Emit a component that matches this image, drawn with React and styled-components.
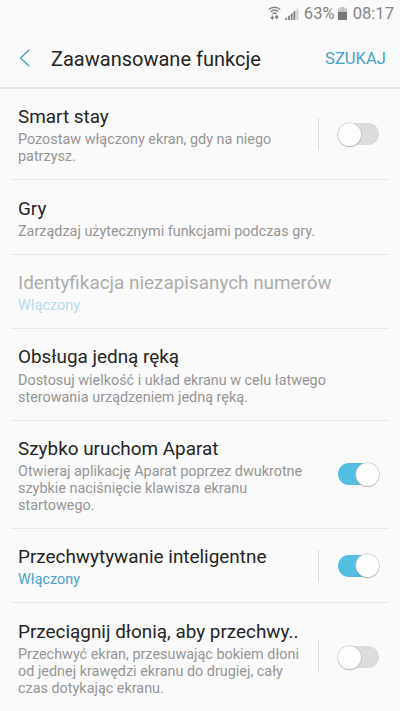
import React from "react";
import styled, { createGlobalStyle } from "styled-components";

const GlobalStyle = createGlobalStyle`
  * {
    box-sizing: border-box;
  }
  body {
    margin: 0;
    background-color: #fafafa;
    font-family: Roboto, sans-serif;
    overflow: hidden;
  }
`;

const Screen = styled.div`
  width: 400px;
  height: 711px;
  overflow: hidden;
  background-color: #fafafa;
`;

const StatusBar = styled.div`
  height: 28px;
  padding-right: 6px;
  display: flex;
  align-items: center;
  justify-content: flex-end;
  color: #858585;
  font-size: 16.6px;
  line-height: 28px;
`;

const WifiIcon = styled.svg`
  width: 13px;
  height: 14px;
  margin: 0 4px 2px 0;
`;

const SignalIcon = styled.svg`
  width: 14px;
  height: 13px;
  margin: 0 5px 1px 0;
`;

const BatteryIcon = styled.svg`
  width: 9px;
  height: 13px;
  margin: 0 6px 1px 3px;
`;

const HeaderBox = styled.header`
  height: 61px;
  padding: 3px 14px 0 19px;
  display: flex;
  align-items: center;
  border-bottom: 2px solid #e8e8e8;
`;

const BackIcon = styled.svg`
  width: 12px;
  height: 18px;
  margin: 0 20px 3px 0;
`;

const HeaderTitle = styled.h1`
  margin: 0;
  color: #252525;
  font-size: 20px;
  font-weight: 400;
  line-height: 24px;
  white-space: nowrap;
`;

const SearchButton = styled.button`
  margin-left: auto;
  padding: 0;
  border: 0;
  background: none;
  color: #47a3c7;
  font-family: inherit;
  font-size: 16.6px;
  line-height: 24px;
`;

const List = styled.ul`
  margin: 0;
  padding: 0 11px;
  list-style-type: none;
`;

const Row = styled.li`
  padding: 16.1px 10px 14.14px 7px;
  display: flex;
  align-items: center;
  border-bottom: 1px solid #e9e9e9;

  &:last-child {
    border-bottom: 0;
  }
`;

const RowText = styled.div`
  flex: 1;
  min-width: 0;
`;

const RowTitle = styled.h2`
  margin: 0 0 2.2px;
  color: ${(props) => (props.$disabled ? "#adadad" : "#252525")};
  font-size: 18.9px;
  font-weight: 400;
  line-height: 24px;
  white-space: nowrap;
`;

const RowDescription = styled.p`
  margin: 0;
  color: ${(props) => props.$color};
  font-size: 14.4px;
  line-height: 17px;
  white-space: pre;
`;

const Separator = styled.div`
  width: 1px;
  height: 32px;
  margin: 0 19px 1.8px 0;
  background-color: #dcdcdc;
`;

const Switch = styled.div`
  width: 41px;
  height: 22px;
  margin-bottom: 1.8px;
  border-radius: 11px;
  display: flex;
  flex-shrink: 0;
  align-items: center;
  justify-content: ${(props) => (props.$on ? "flex-end" : "flex-start")};
  background-color: ${(props) => (props.$on ? "#55bfe3" : "#dcdcdc")};
`;

const Knob = styled.div`
  width: 23px;
  height: 23px;
  flex-shrink: 0;
  border-radius: 50%;
  background-color: #fdfdfd;
  box-shadow: 0 0 0 0.6px #bcbcbc, 0 1px 1px rgba(0, 0, 0, 0.28);
`;

const descriptionColors = {
  normal: "#969696",
  active: "#47a3c7",
  disabled: "#b5dae9",
};

const settings = [
  {
    title: "Smart stay",
    description: "Pozostaw włączony ekran, gdy na niego\npatrzysz.",
    hasSwitch: true,
    separated: true,
  },
  {
    title: "Gry",
    description: "Zarządzaj użytecznymi funkcjami podczas gry.",
  },
  {
    title: "Identyfikacja niezapisanych numerów",
    description: "Włączony",
    state: "disabled",
  },
  {
    title: "Obsługa jedną ręką",
    description:
      "Dostosuj wielkość i układ ekranu w celu łatwego\nsterowania urządzeniem jedną ręką.",
  },
  {
    title: "Szybko uruchom Aparat",
    description:
      "Otwieraj aplikację Aparat poprzez dwukrotne\nszybkie naciśnięcie klawisza ekranu\nstartowego.",
    hasSwitch: true,
    on: true,
  },
  {
    title: "Przechwytywanie inteligentne",
    description: "Włączony",
    state: "active",
    hasSwitch: true,
    separated: true,
    on: true,
  },
  {
    title: "Przeciągnij dłonią, aby przechwy..",
    description:
      "Przechwyć ekran, przesuwając bokiem dłoni\nod jednej krawędzi ekranu do drugiej, cały\nczas dotykając ekranu.",
    hasSwitch: true,
    separated: true,
  },
];

const Status = () => (
  <StatusBar>
    <WifiIcon viewBox="0 0 13 14" fill="none" stroke="#858585">
      <path d="M0.8 3.6C4 0.4 9 0.4 12.2 3.6" strokeWidth="1.4" />
      <path d="M2.7 5.8C5 3.6 8 3.6 10.3 5.8" strokeWidth="1.4" />
      <path d="M4.5 7.9C5.8 6.8 7.2 6.8 8.5 7.9" strokeWidth="1.4" />
      <path d="M4.3 9.5V13M2.7 11.2L4.3 13L5.9 11.2" strokeWidth="1.2" />
      <path d="M8.7 13.2V9.7M7.1 11.5L8.7 9.7L10.3 11.5" strokeWidth="1.2" />
    </WifiIcon>
    <SignalIcon viewBox="0 0 14 13">
      <path d="M0 13V11.6L1.8 10.4V13Z" fill="#858585" />
      <path d="M2.8 13V9.7L4.9 8V13Z" fill="#858585" />
      <path d="M5.7 13V7.3L7.6 5.7V13Z" fill="#858585" />
      <path d="M8.4 13V5L10.4 3.2V13Z" fill="#858585" />
      <path d="M11.3 13V2.5L13.4 0.5V13Z" fill="#cfcfcf" />
    </SignalIcon>
    63%
    <BatteryIcon viewBox="0 0 9 13">
      <path d="M0 1.5H2.5V0H6.5V1.5H9V5H0Z" fill="#c3c3c3" />
      <path d="M0 5H9V13H0Z" fill="#777777" />
    </BatteryIcon>
    08:17
  </StatusBar>
);

const Header = () => (
  <HeaderBox>
    <BackIcon viewBox="0 0 12 18" fill="none" stroke="#47a3c7">
      <path d="M10.3 0.8L1.6 9L10.3 17.2" strokeWidth="1.4" />
    </BackIcon>
    <HeaderTitle>Zaawansowane funkcje</HeaderTitle>
    <SearchButton>SZUKAJ</SearchButton>
  </HeaderBox>
);

const Setting = ({ item }) => (
  <Row>
    <RowText>
      <RowTitle $disabled={item.state === "disabled"}>{item.title}</RowTitle>
      <RowDescription $color={descriptionColors[item.state || "normal"]}>
        {item.description}
      </RowDescription>
    </RowText>
    {item.separated && <Separator />}
    {item.hasSwitch && (
      <Switch $on={item.on}>
        <Knob />
      </Switch>
    )}
  </Row>
);

const App = () => (
  <Screen>
    <GlobalStyle />
    <Status />
    <Header />
    <List>
      {settings.map((item) => (
        <Setting key={item.title} item={item} />
      ))}
    </List>
  </Screen>
);

export default App;
